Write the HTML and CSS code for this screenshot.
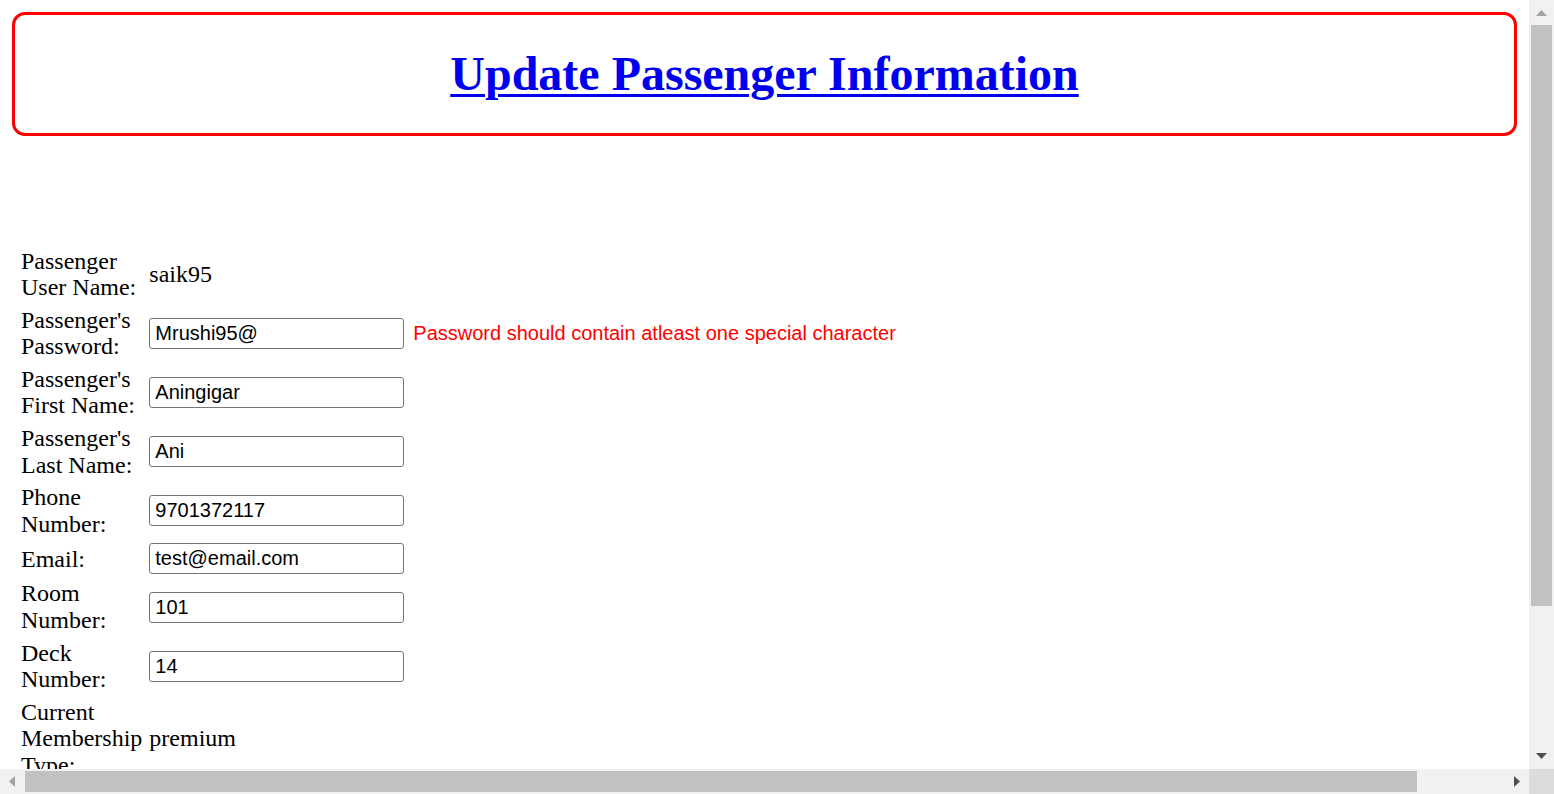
FILE: index.html
```html
<!DOCTYPE html>
<html lang="en">
<head>
<meta charset="utf-8">
<title>Update Passenger Information</title>
<link rel="stylesheet" href="styles.css">
</head>
<body>
<div class="banner">
  <h1 class="title"><a href="#">Update Passenger Information</a></h1>
</div>

<form class="form">
  <div class="label">Passenger User Name:</div>
  <div class="value text">saik95</div>

  <div class="label">Passenger's Password:</div>
  <div class="value"><input class="field" type="text" value="Mrushi95@"><span class="error">Password should contain atleast one special character</span></div>

  <div class="label">Passenger's First Name:</div>
  <div class="value"><input class="field" type="text" value="Aningigar"></div>

  <div class="label">Passenger's Last Name:</div>
  <div class="value"><input class="field" type="text" value="Ani"></div>

  <div class="label">Phone Number:</div>
  <div class="value"><input class="field" type="text" value="9701372117"></div>

  <div class="label">Email:</div>
  <div class="value"><input class="field" type="text" value="test@email.com"></div>

  <div class="label">Room Number:</div>
  <div class="value"><input class="field" type="text" value="101"></div>

  <div class="label">Deck Number:</div>
  <div class="value"><input class="field" type="text" value="14"></div>

  <div class="label">Current Membership Type:</div>
  <div class="value text">premium</div>
</form>

<div class="vscroll">
  <svg class="arr arr-up" width="11" height="6" viewBox="0 0 11 6"><polygon points="0,6 11,6 5.5,0" fill="#a3a3a3"/></svg>
  <div class="vthumb"></div>
  <svg class="arr arr-down" width="11" height="6" viewBox="0 0 11 6"><polygon points="0,0 11,0 5.5,6" fill="#505050"/></svg>
</div>
<div class="hscroll">
  <svg class="arr arr-left" width="6" height="11" viewBox="0 0 6 11"><polygon points="6,0 6,11 0,5.5" fill="#a3a3a3"/></svg>
  <div class="hthumb"></div>
  <svg class="arr arr-right" width="6" height="11" viewBox="0 0 6 11"><polygon points="0,0 0,11 6,5.5" fill="#505050"/></svg>
</div>
<div class="corner"></div>
</body>
</html>
```
FILE: styles.css
```css
html {
  overflow: hidden;
  background: #ffffff;
}

body {
  margin: 12px;
  padding-right: 25px;
  font-family: "Liberation Serif", "Times New Roman", serif;
  font-size: 24px;
  line-height: 26.6px;
  color: #000000;
}

.banner {
  border: 3px solid #ff0000;
  border-radius: 13px;
  text-align: center;
}

.title {
  margin: 32px 0;
  font-size: 48px;
  line-height: 54px;
  font-weight: bold;
}

.title a {
  color: #0000ee;
  text-decoration: underline;
  text-decoration-thickness: 3px;
  text-underline-offset: 4px;
}

.form {
  margin: 107px 0 0 4.5px;
  padding: 3px;
  display: grid;
  grid-template-columns: min-content max-content;
  column-gap: 4px;
  row-gap: 3px;
  align-items: center;
  width: max-content;
}

.label {
  padding: 1.5px;
}

.value {
  padding: 1.5px;
  display: flex;
  align-items: baseline;
}

.field {
  box-sizing: border-box;
  width: 255px;
  height: 31px;
  margin: 0;
  padding: 0 5px;
  border: 1px solid #767676;
  border-radius: 3px;
  font-family: "Liberation Sans", Arial, sans-serif;
  font-size: 20px;
  color: #000000;
  background: #ffffff;
}

.error {
  margin-left: 9px;
  font-family: "Liberation Sans", Arial, sans-serif;
  font-size: 20px;
  line-height: 23px;
  color: #ff0000;
  white-space: nowrap;
}

/* simulated browser scrollbars (overlay chrome) */
.vscroll {
  position: fixed;
  top: 0;
  right: 0;
  width: 25px;
  height: 769px;
  background: #f1f1f1;
}

.vthumb {
  position: absolute;
  left: 2px;
  top: 25px;
  width: 21px;
  height: 581px;
  background: #c1c1c1;
}

.hscroll {
  position: fixed;
  left: 0;
  bottom: 0;
  width: 1529px;
  height: 25px;
  background: #f1f1f1;
}

.hthumb {
  position: absolute;
  left: 25px;
  top: 2px;
  width: 1392px;
  height: 21px;
  background: #c1c1c1;
}

.corner {
  position: fixed;
  right: 0;
  bottom: 0;
  width: 25px;
  height: 25px;
  background: #dcdcdc;
}

.arr {
  position: absolute;
  display: block;
}

.arr-up {
  left: 7px;
  top: 10px;
}

.arr-down {
  left: 7px;
  top: 753px;
}

.arr-left {
  left: 9px;
  top: 7px;
}

.arr-right {
  left: 1514px;
  top: 7px;
}
```
